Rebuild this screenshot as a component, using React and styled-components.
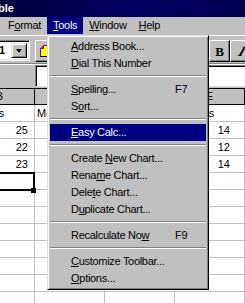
import React from "react";
import styled, { createGlobalStyle } from "styled-components";

const GlobalStyle = createGlobalStyle`
  html, body { margin: 0; padding: 0; background: #c0c0c0; overflow: hidden; }
  body { font-family: "Liberation Sans", Arial, sans-serif; font-size: 11px; color: #000; }
`;

const Window = styled.div`
  width: 251px;
  height: 303px;
  overflow: hidden;
  background: #c0c0c0;
  display: flex;
  flex-direction: column;
`;

const TitleBar = styled.div`
  flex-shrink: 0;
  height: 17px;
  background:
    repeating-conic-gradient(rgba(0, 0, 0, 0.45) 0 25%, transparent 0 50%) 0 0 / 2px 2px,
    linear-gradient(to right, #000050, #000080 55%, #00006a);
  color: #fff;
  font-weight: bold;
  line-height: 16px;
  text-indent: -2px;
  white-space: nowrap;
`;

const MenuBar = styled.div`
  flex-shrink: 0;
  height: 18px;
  display: flex;
  align-items: flex-start;
  padding-left: 2px;
  letter-spacing: -0.3px;
`;

const MenuTitle = styled.div`
  position: relative;
  height: 17px;
  line-height: 17px;
  padding: 0 6px;
  white-space: nowrap;
  background: ${(p) => (p.$open ? "#000080" : "transparent")};
  color: ${(p) => (p.$open ? "#fff" : "#000")};
`;

const Acc = styled.span`
  text-decoration: underline;
  text-underline-offset: 1px;
`;

const Dropdown = styled.div`
  position: absolute;
  top: 18px;
  left: 0;
  z-index: 10;
  width: 162px;
  box-sizing: border-box;
  padding: 2px;
  background: #c0c0c0;
  color: #000;
  border: 1px solid;
  border-color: #dfdfdf #000 #000 #dfdfdf;
  box-shadow: inset 1px 1px #fff, inset -1px -1px #808080;
  letter-spacing: -0.3px;
`;

const Entry = styled.div`
  display: grid;
  grid-template-columns: 1fr 31px;
  height: 17px;
  line-height: 17px;
  padding-left: 21px;
  white-space: nowrap;
  background: ${(p) => (p.$hl ? "#000080" : "transparent")};
  color: ${(p) => (p.$hl ? "#fff" : "#000")};
`;

const Separator = styled.div`
  height: 0;
  margin: 3px 0 4px;
  border-top: 1px solid #808080;
  border-bottom: 1px solid #fff;
`;

const Toolbar = styled.div`
  flex-shrink: 0;
  height: 28px;
  box-sizing: border-box;
  border-top: 1px solid #fff;
  padding-top: 4px;
  display: grid;
  grid-template-columns: 30px 5px 23px 1fr 21px 21px;
  align-items: start;
`;

const Combo = styled.div`
  grid-column: 1;
  margin-left: -20px;
  width: 50px;
  height: 21px;
  box-sizing: border-box;
  display: flex;
  border: 1px solid;
  border-color: #808080 #fff #fff #808080;
  box-shadow: inset 1px 1px #000, inset -1px -1px #dfdfdf;
  padding: 2px 2px 2px 2px;
  background: #fff;
`;

const ComboField = styled.div`
  flex: 1;
  padding-left: 16px;
  line-height: 15px;
  font-weight: bold;
`;

const ComboButton = styled.div`
  width: 16px;
  box-sizing: border-box;
  background: #c0c0c0;
  border: 1px solid;
  border-color: #dfdfdf #000 #000 #dfdfdf;
  box-shadow: inset 1px 1px #fff, inset -1px -1px #808080;
  display: flex;
  align-items: center;
  justify-content: center;
  &::after {
    content: "";
    border-style: solid;
    border-width: 4px 3.5px 0 3.5px;
    border-color: #000 transparent transparent transparent;
  }
`;

const ToolButton = styled.div`
  grid-column: ${(p) => p.$col};
  height: 22px;
  box-sizing: border-box;
  background: #c0c0c0;
  border: 1px solid;
  border-color: #fff #000 #000 #fff;
  box-shadow: inset -1px -1px #808080;
  display: flex;
  align-items: center;
  justify-content: ${(p) => (p.$icon ? "flex-start" : "center")};
  padding: ${(p) => (p.$icon ? "0 0 0 4px" : "2px 0 0 0")};
  font-family: "Liberation Serif", "Times New Roman", serif;
  font-weight: bold;
  font-size: 13px;
`;

const ItalicGlyph = styled.span`
  display: inline-block;
  font-style: italic;
  font-size: 14px;
  transform: skewX(-22deg);
  margin-left: 3px;
`;

const FormulaBar = styled.div`
  flex-shrink: 0;
  height: 25px;
  box-sizing: border-box;
  border-top: 1px solid #808080;
  box-shadow: inset 0 1px #fff;
  padding-top: 1px;
  display: grid;
  grid-template-columns: 35px 1fr;
`;

const FormulaField = styled.div`
  grid-column: 2;
  height: 22px;
  box-sizing: border-box;
  background: #fff;
  border: 1px solid;
  border-color: #808080 #dfdfdf #dfdfdf #808080;
  box-shadow: inset 1px 1px #000;
`;

const Sheet = styled.div`
  margin-left: -35px;
  border-top: 1px solid #000;
  background: #fff;
  flex: 1;
`;

const Row = styled.div`
  display: flex;
  height: ${(p) => (p.$header ? "16px" : "17px")};
  box-sizing: border-box;
  border-bottom: 1px solid ${(p) => (p.$header ? "#000" : "#c0c0c0")};
  background: ${(p) => (p.$header ? "#c0c0c0" : "#fff")};
`;

const Cell = styled.div`
  position: relative;
  flex: 0 0 70px;
  box-sizing: border-box;
  border-right: 1px solid ${(p) => (p.$header ? "#000" : "#c0c0c0")};
  line-height: ${(p) => (p.$header ? "15px" : "16px")};
  text-align: ${(p) => p.$align || "left"};
  padding: 0 ${(p) => p.$pr ?? 2}px 0 2px;
  white-space: nowrap;
  ${(p) =>
    p.$selected &&
    `
    &::after {
      content: "";
      position: absolute;
      top: -1px;
      left: -1px;
      right: -1px;
      bottom: -2px;
      border: 2px solid #000;
    }
    &::before {
      content: "";
      position: absolute;
      right: -2px;
      bottom: -4px;
      width: 5px;
      height: 5px;
      background: #000;
      z-index: 1;
    }
  `}
`;

const Label = ({ text, acc }) =>
  acc == null ? (
    text
  ) : (
    <>
      {text.slice(0, acc)}
      <Acc>{text[acc]}</Acc>
      {text.slice(acc + 1)}
    </>
  );

const toolsMenu = [
  { text: "Address Book...", acc: 0 },
  { text: "Dial This Number", acc: 0 },
  "sep",
  { text: "Spelling...", acc: 0, key: "F7" },
  { text: "Sort...", acc: 1 },
  "sep",
  { text: "Easy Calc...", acc: 0, hl: true },
  "sep",
  { text: "Create New Chart...", acc: 7 },
  { text: "Rename Chart...", acc: 4 },
  { text: "Delete Chart...", acc: 4 },
  { text: "Duplicate Chart...", acc: 1 },
  "sep",
  { text: "Recalculate Now", acc: 14, key: "F9" },
  "sep",
  { text: "Customize Toolbar...", acc: 0 },
  { text: "Options...", acc: 0 },
];

const menus = [
  { text: "Format", acc: 1 },
  { text: "Tools", acc: 0, open: true },
  { text: "Window", acc: 0 },
  { text: "Help", acc: 0 },
];

const rows = [
  ["Rentals", "Months", "", "Rentals"],
  ["25", "", "", "14"],
  ["22", "", "", "12"],
  ["23", "", "", "14"],
  ["", "", "", ""],
  ["", "", "", ""],
  ["", "", "", ""],
  ["", "", "", ""],
  ["", "", "", ""],
  ["", "", "", ""],
  ["", "", "", ""],
  ["", "", "", ""],
];

const isNum = (v) => /^\d+$/.test(v);
const colPad = [6, 2, 2, 14];

const PasteIcon = () => (
  <svg width="10" height="12" viewBox="0 0 10 12">
    <path d="M0.5 11.5 V3.5 L3.5 0.5 H9.5 V11.5 Z" fill="#ffff00" stroke="#800080" />
    <path d="M0.5 3.5 H3.5 V0.5" fill="#ff00ff" stroke="#800080" />
    <path d="M0 11.5 H9" stroke="#000" />
  </svg>
);

export default function App() {
  return (
    <>
      <GlobalStyle />
      <Window>
        <TitleBar>ble</TitleBar>
        <MenuBar>
          {menus.map((m) => (
            <MenuTitle key={m.text} $open={m.open}>
              <Label text={m.text} acc={m.acc} />
              {m.open && (
                <Dropdown>
                  {toolsMenu.map((it, i) =>
                    it === "sep" ? (
                      <Separator key={i} />
                    ) : (
                      <Entry key={i} $hl={it.hl}>
                        <span>
                          <Label text={it.text} acc={it.acc} />
                        </span>
                        <span>{it.key || ""}</span>
                      </Entry>
                    )
                  )}
                </Dropdown>
              )}
            </MenuTitle>
          ))}
        </MenuBar>
        <Toolbar>
          <Combo>
            <ComboField>1</ComboField>
            <ComboButton />
          </Combo>
          <ToolButton $col={3} $icon>
            <PasteIcon />
          </ToolButton>
          <ToolButton $col={5}>B</ToolButton>
          <ToolButton $col={6}>
            <ItalicGlyph>I</ItalicGlyph>
          </ToolButton>
        </Toolbar>
        <FormulaBar>
          <FormulaField />
        </FormulaBar>
        <Sheet>
          <Row $header>
            {["B", "C", "D", "E"].map((c) => (
              <Cell key={c} $header $align="center">
                {c}
              </Cell>
            ))}
          </Row>
          {rows.map((r, ri) => (
            <Row key={ri}>
              {r.map((v, ci) => (
                <Cell
                  key={ci}
                  $align={isNum(v) ? "right" : "left"}
                  $pr={isNum(v) ? colPad[ci] : 2}
                  $selected={ri === 4 && ci === 0}
                >
                  {v}
                </Cell>
              ))}
            </Row>
          ))}
        </Sheet>
      </Window>
    </>
  );
}
